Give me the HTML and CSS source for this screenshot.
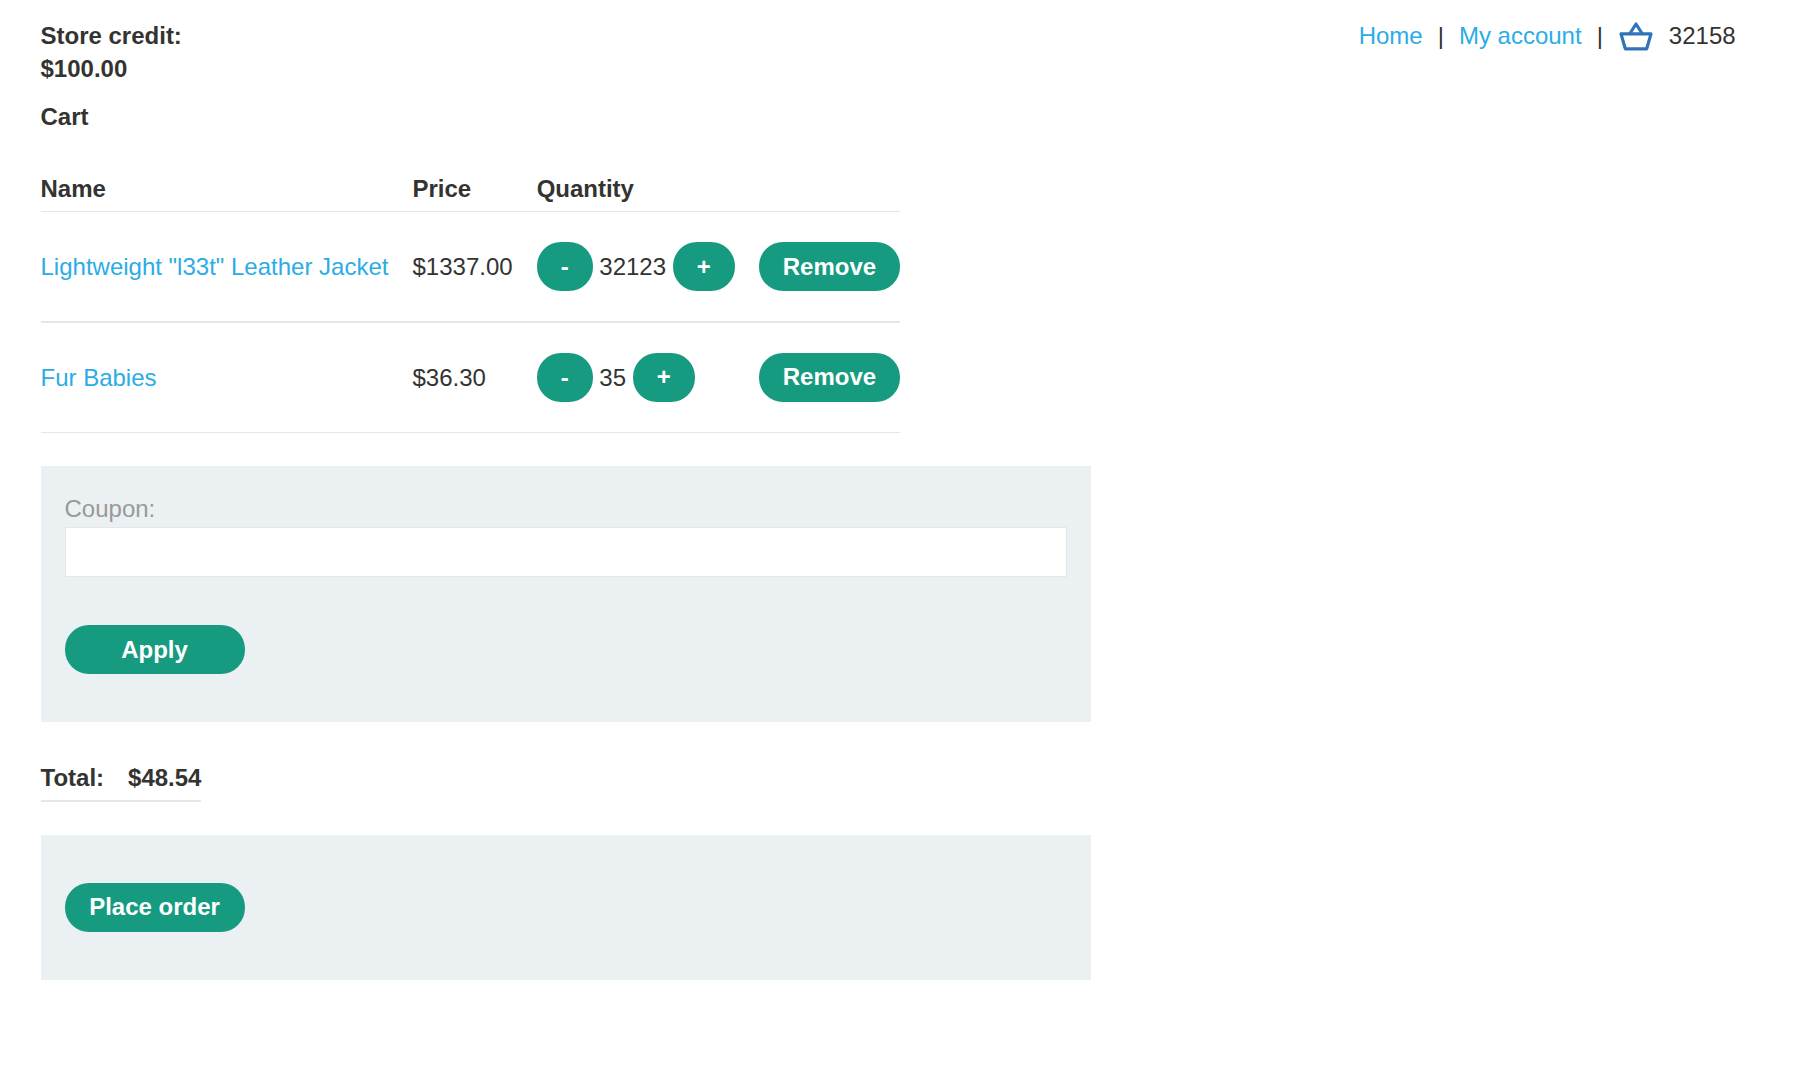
FILE: index.html
```html
<!DOCTYPE html>
<html lang="en">
<head>
<meta charset="utf-8">
<title>Cart</title>
<link rel="stylesheet" href="styles.css">
</head>
<body>
<div class="page">
  <header class="header">
    <div class="credit"><strong>Store credit:<br>$100.00</strong></div>
    <nav class="nav">
      <a href="#">Home</a><span>|</span><a href="#">My account</a><span>|</span>
      <a href="#" class="basket" aria-label="Cart">
        <svg width="38" height="33" viewBox="0 0 38 33" fill="none" stroke="#3073b9" stroke-width="3.2" stroke-linejoin="round" stroke-linecap="round">
          <path d="M3 14.9H33L28.7 29.8H7.3Z"/>
          <path d="M11.9 14.5L18 5L24.1 14.5"/>
        </svg>
      </a>
      <span class="count">32158</span>
    </nav>
  </header>
  <h1 class="title">Cart</h1>
  <table class="cart">
    <thead>
      <tr><th>Name</th><th>Price</th><th>Quantity</th><th></th></tr>
    </thead>
    <tbody>
      <tr>
        <td><a href="#">Lightweight "l33t" Leather Jacket</a></td>
        <td>$1337.00</td>
        <td><div class="quantity"><button class="button">-</button><span>32123</span><button class="button">+</button></div></td>
        <td><button class="button">Remove</button></td>
      </tr>
      <tr>
        <td><a href="#">Fur Babies</a></td>
        <td>$36.30</td>
        <td><div class="quantity"><button class="button">-</button><span>35</span><button class="button raised">+</button></div></td>
        <td><button class="button raised">Remove</button></td>
      </tr>
    </tbody>
  </table>
  <form class="panel coupon">
    <label for="coupon">Coupon:</label>
    <input id="coupon" type="text">
    <button class="button wide" type="button">Apply</button>
  </form>
  <div class="total"><strong>Total:</strong><strong>$48.54</strong></div>
  <form class="panel order">
    <button class="button wide raised" type="button">Place order</button>
  </form>
</div>
</body>
</html>
```

FILE: styles.css
```css
* {
  box-sizing: border-box;
}

body {
  margin: 0;
  background: #fff;
  color: #333332;
  font: 24px/33px "Liberation Sans", Arial, sans-serif;
}

a {
  color: #2cace5;
  text-decoration: none;
}

.page {
  padding: 19px 59.4px 0 40.5px;
}

.header {
  display: flex;
  justify-content: space-between;
  align-items: flex-start;
}

.nav {
  display: flex;
  gap: 15px;
}

.basket {
  display: flex;
  height: 33px;
}

.count {
  margin-left: -2px;
}

.title {
  margin: 15px 0 39px;
  font-size: 24px;
}

.cart {
  width: 859.7px;
  border-collapse: separate;
  border-spacing: 0;
}

.cart th,
.cart td {
  padding: 0 24px 0 0;
  text-align: left;
  vertical-align: middle;
  white-space: nowrap;
  border-bottom: 1px solid #e6e6e6;
}

.cart th {
  height: 40px;
  padding-bottom: 6px;
}

.cart td {
  height: 110px;
}

.cart tbody tr:first-child td {
  height: 111px;
  border-bottom-width: 2px;
}

.cart th:last-child,
.cart td:last-child {
  padding-right: 0;
}

.quantity {
  display: flex;
  align-items: center;
  gap: 6.67px;
}

.button {
  display: block;
  height: 49px;
  margin: 0;
  padding: 8px 24px;
  border: 0;
  border-radius: 24px;
  background: #169b80;
  color: #fff;
  font: bold 24px/33px "Liberation Sans", Arial, sans-serif;
  text-align: center;
}

.raised {
  padding-top: 7px;
  padding-bottom: 9px;
}

.wide {
  width: 180px;
}

.panel {
  width: 1050px;
  background: #ebf0f3;
}

.coupon {
  height: 256px;
  margin-top: 33px;
  padding: 26px 24px 48px;
}

.coupon label {
  display: block;
  margin-bottom: 2px;
  color: #999;
}

.coupon input {
  display: block;
  width: 100%;
  height: 50px;
  margin: 0 0 48px;
  border: 1px solid #e6e6e6;
  background: #fff;
  font: inherit;
}

.total {
  display: flex;
  gap: 24px;
  width: max-content;
  margin: 39px 0 33px;
  padding-bottom: 6px;
  border-bottom: 2px solid #e6e6e6;
}

.order {
  height: 145px;
  padding: 48px 24px;
}
```
